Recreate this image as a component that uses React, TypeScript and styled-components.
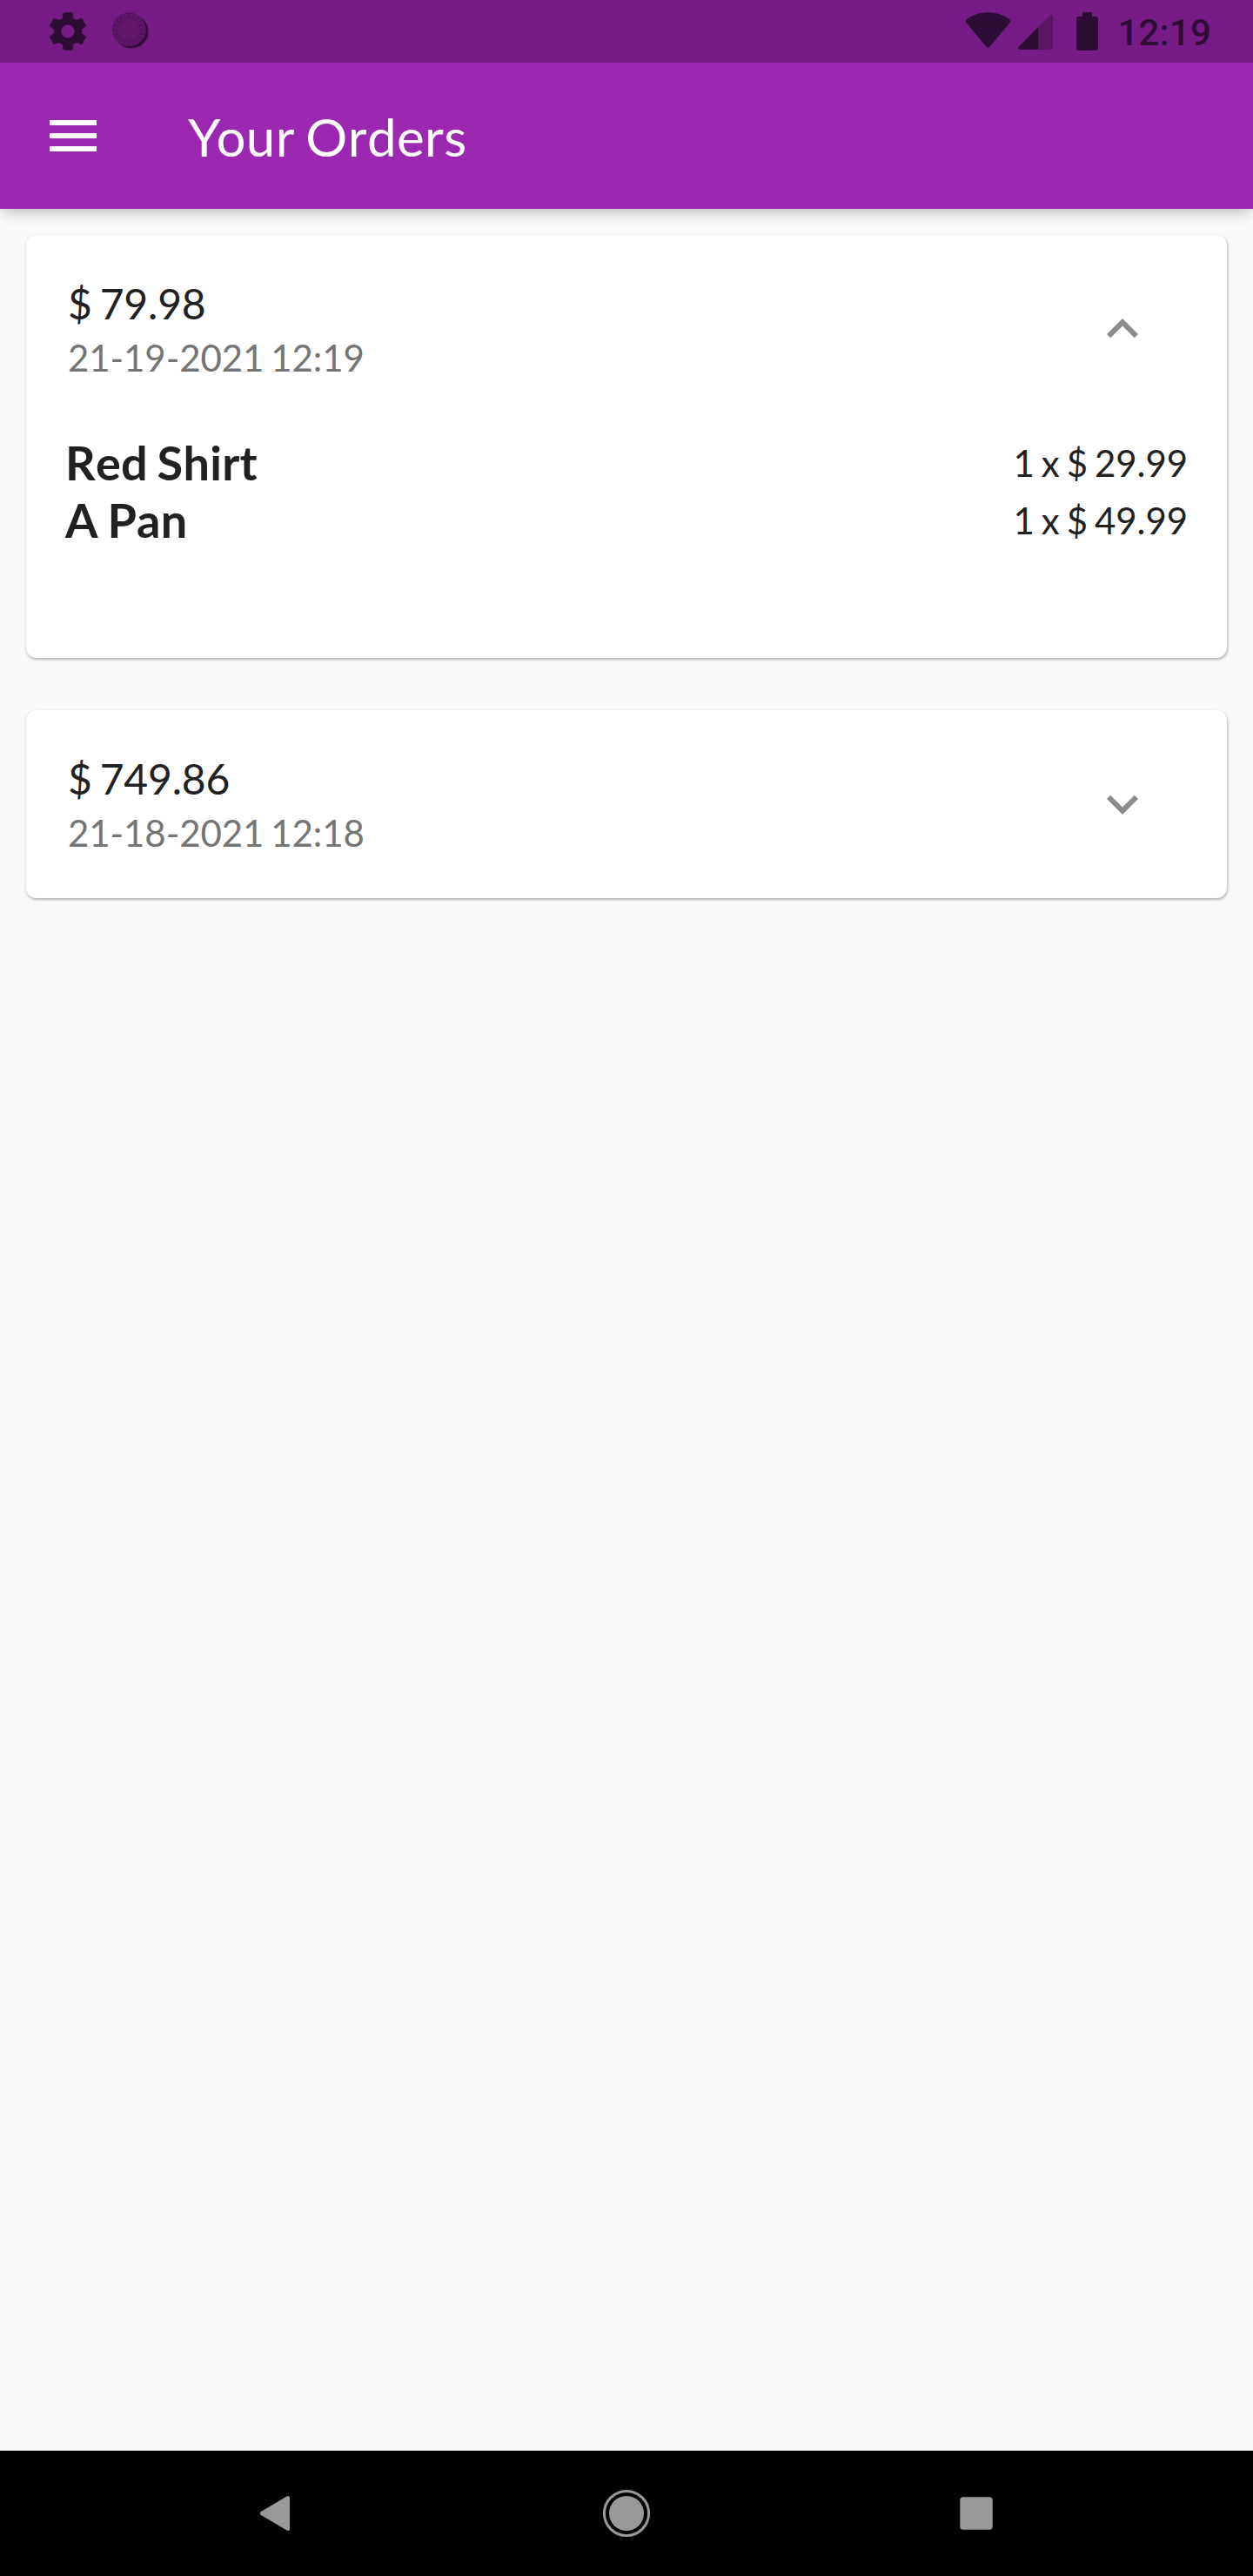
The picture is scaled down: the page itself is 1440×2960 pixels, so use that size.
import React, { useState } from "react";
import styled, { createGlobalStyle } from "styled-components";

const Global = createGlobalStyle`
  * { box-sizing: border-box; }
  body { margin: 0; background: #fafafa; }
`;

const dim = "#2f0c35";
const faded = "#5a1665";

const Screen = styled.div`
  display: flex;
  flex-direction: column;
  width: 1440px;
  height: 2960px;
  background: #fafafa;
  color: #212121;
  font-family: Lato, "Liberation Sans", sans-serif;
  font-kerning: none;
`;

const TopArea = styled.header`
  background: #9c27b0;
  box-shadow: 0 6px 15px -4px rgba(0, 0, 0, 0.2), 0 4px 20px -2px rgba(0, 0, 0, 0.13);
`;

const StatusBar = styled.div`
  display: flex;
  justify-content: space-between;
  height: 72px;
  padding: 0 48px 0 52px;
  background: #751d84;
`;

const StatusGroup = styled.div`
  display: flex;
  align-items: center;
`;

const Glyph = styled.svg<{ $gap?: number }>`
  display: block;
  flex: none;
  margin-left: ${(p) => p.$gap ?? 0}px;
`;

const Clock = styled.time`
  width: 108px;
  margin-left: 22px;
  padding-top: 3px;
  color: ${dim};
  font: 500 42px/72px Roboto, sans-serif;
  letter-spacing: 0.2px;
  text-align: right;
  white-space: nowrap;
`;

const AppBar = styled.div`
  display: flex;
  align-items: center;
  height: 168px;
  padding-left: 57px;
`;

const MenuButton = styled.button`
  display: flex;
  flex-direction: column;
  gap: 9px;
  width: 54px;
  padding: 0;
  border: 0;
  background: none;
`;

const MenuLine = styled.span`
  height: 6px;
  background: #fff;
`;

const Title = styled.h1`
  margin: 0 0 0 105px;
  padding-top: 2px;
  color: #fff;
  font-size: 60px;
  font-weight: 400;
  line-height: 72px;
  letter-spacing: 0.4px;
  word-spacing: -3.5px;

  &::first-letter {
    letter-spacing: -5px;
  }
`;

const OrderList = styled.main`
  display: flex;
  flex: 1;
  flex-direction: column;
  gap: 60px;
  padding: 30px;
`;

const Card = styled.article`
  border-radius: 12px;
  background: #fff;
  box-shadow: 1px 2px 3px rgba(0, 0, 0, 0.22), 0 1px 4px rgba(0, 0, 0, 0.12);
`;

const CardHeader = styled.div`
  display: flex;
  align-items: center;
  justify-content: space-between;
  height: 216px;
  padding: 0 84px 0 48px;
`;

const Summary = styled.div`
  display: flex;
  flex-direction: column;
  gap: 2px;
  padding-top: 3px;
`;

const Amount = styled.span`
  font-size: 48px;
  line-height: 61px;
  letter-spacing: -0.2px;
  word-spacing: -3px;
`;

const Placed = styled.span`
  color: #757575;
  font-size: 42px;
  line-height: 60px;
  letter-spacing: -0.08px;
  word-spacing: -2.65px;
`;

const Toggle = styled.button`
  padding: 0;
  border: 0;
  background: none;
`;

const Items = styled.ul`
  height: 270px;
  margin: 0;
  padding: 13px 45px 0;
  list-style: none;
`;

const Item = styled.li`
  display: flex;
  justify-content: space-between;
  line-height: 66px;
`;

const ItemName = styled.span`
  font-size: 54px;
  font-weight: 700;
  letter-spacing: 0.25px;
  word-spacing: -2.7px;
`;

const ItemPrice = styled.span`
  font-size: 42px;
  letter-spacing: -0.07px;
  word-spacing: -2.65px;
`;

const NavBar = styled.nav`
  display: flex;
  align-items: center;
  justify-content: space-between;
  height: 144px;
  padding: 0 282px;
  background: #000;
`;

type Line = { name: string; price: string };
type Order = { total: string; date: string; lines: Line[] };

const orders: Order[] = [
  {
    total: "$ 79.98",
    date: "21-19-2021 12:19",
    lines: [
      { name: "Red Shirt", price: "1 x $ 29.99" },
      { name: "A Pan", price: "1 x $ 49.99" },
    ],
  },
  { total: "$ 749.86", date: "21-18-2021 12:18", lines: [] },
];

const ticks = Array.from({ length: 20 }, (_, i) => i * 18);

function OrderCard({ order, initiallyOpen }: { order: Order; initiallyOpen: boolean }) {
  const [open, setOpen] = useState(initiallyOpen);
  return (
    <Card>
      <CardHeader>
        <Summary>
          <Amount>{order.total}</Amount>
          <Placed>{order.date}</Placed>
        </Summary>
        <Toggle aria-label="Toggle details" onClick={() => setOpen(!open)}>
          <Glyph width="72" height="72" viewBox="0 0 24 24" fill="#8c8c8c">
            <path
              d={
                open
                  ? "M12 8l-6 6 1.41 1.41L12 10.83l4.59 4.58L18 14z"
                  : "M16.59 8.59L12 13.17 7.41 8.59 6 10l6 6 6-6z"
              }
            />
          </Glyph>
        </Toggle>
      </CardHeader>
      {open && (
        <Items>
          {order.lines.map((line) => (
            <Item key={line.name}>
              <ItemName>{line.name}</ItemName>
              <ItemPrice>{line.price}</ItemPrice>
            </Item>
          ))}
        </Items>
      )}
    </Card>
  );
}

export default function App() {
  return (
    <Screen>
      <Global />
      <TopArea>
        <StatusBar>
          <StatusGroup>
            <Glyph width="52" height="52" viewBox="0 0 24 24" fill={dim}>
              <path d="M19.43 12.98c.04-.32.07-.64.07-.98s-.03-.66-.07-.98l2.11-1.65c.19-.15.24-.42.12-.64l-2-3.46c-.12-.22-.39-.3-.61-.22l-2.49 1c-.52-.4-1.08-.73-1.69-.98l-.38-2.65C14.46 2.18 14.25 2 14 2h-4c-.25 0-.46.18-.49.42l-.38 2.65c-.61.25-1.17.59-1.69.98l-2.49-1c-.23-.09-.49 0-.61.22l-2 3.46c-.13.22-.07.49.12.64l2.11 1.65c-.04.32-.07.65-.07.98s.03.66.07.98l-2.11 1.65c-.19.15-.24.42-.12.64l2 3.46c.12.22.39.3.61.22l2.49-1c.52.4 1.08.73 1.69.98l.38 2.65c.03.24.24.42.49.42h4c.25 0 .46-.18.49-.42l.38-2.65c.61-.25 1.17-.59 1.69-.98l2.49 1c.23.09.49 0 .61-.22l2-3.46c.12-.22.07-.49-.12-.64l-2.11-1.65zM12 15.5c-1.93 0-3.5-1.57-3.5-3.5s1.57-3.5 3.5-3.5 3.5 1.57 3.5 3.5-1.57 3.5-3.5 3.5z" />
            </Glyph>
            <Glyph $gap={20} width="52" height="72" viewBox="124 0 52 72">
              <circle cx="151.4" cy="36.800" r="19.800" fill="#64196f" />
              <circle cx="150.8" cy="36" r="19.300" fill={dim} />
              <circle cx="148.3" cy="34" r="19.500" fill="#56155f" />
              <circle cx="148.3" cy="34" r="18.600" fill="#601769" />
              {ticks.map((a) => (
                <path
                  key={a}
                  d="M148.3 15.500v6.500"
                  stroke="#541360"
                  strokeWidth="2.600"
                  transform={`rotate(${a} 148.3 34)`}
                />
              ))}
            </Glyph>
          </StatusGroup>
          <StatusGroup>
            <Glyph width="52" height="72" viewBox="1110 0 52 72" fill={dim}>
              <path d="M1110.6 22.5C1117 17.5 1126 14.3 1135.5 14.3S1154 17.5 1160.400 22.500Q1161.600 24 1160.500 26L1137.500 53.800Q1135.500 56 1133.500 53.800L1110.500 26Q1109.400 24 1110.600 22.500Z" />
            </Glyph>
            <Glyph $gap={8} width="40" height="72" viewBox="1170 0 40 72">
              <path d="M1206.500 17.800Q1210 15.500 1210 19.500V54.500Q1210 57 1207.500 57H1193V31.300Z" fill={faded} />
              <path d="M1193 31.300V57H1172.500Q1168.800 57 1170.800 53.500Z" fill={dim} />
            </Glyph>
            <Glyph $gap={27} width="25" height="72" viewBox="1237 0 25 72" fill={dim}>
              <path d="M1244 14h11v5h5q2 0 2 2v35q0 2-2 2h-21q-2 0-2-2v-35q0-2 2-2h5z" />
            </Glyph>
            <Clock>12:19</Clock>
          </StatusGroup>
        </StatusBar>
        <AppBar>
          <MenuButton aria-label="Menu">
            <MenuLine />
            <MenuLine />
            <MenuLine />
          </MenuButton>
          <Title>Your Orders</Title>
        </AppBar>
      </TopArea>
      <OrderList>
        {orders.map((order, i) => (
          <OrderCard key={order.date} order={order} initiallyOpen={i === 0} />
        ))}
      </OrderList>
      <NavBar>
        <Glyph width="72" height="72" viewBox="0 0 72 72" fill="#999">
          <path d="M18 34L47.500 16.400Q51 15 51 18.500V53.500Q51 57 47.500 55.600L18 38Q15.500 36 18 34Z" />
        </Glyph>
        <Glyph width="72" height="72" viewBox="0 0 72 72" fill="#999">
          <circle cx="36" cy="36" r="20" />
          <circle cx="36" cy="36" r="25.600" fill="none" stroke="#999" strokeWidth="3" />
        </Glyph>
        <Glyph width="72" height="72" viewBox="0 0 72 72" fill="#999">
          <rect x="17.300" y="17.300" width="37.400" height="37.400" rx="3.500" />
        </Glyph>
      </NavBar>
    </Screen>
  );
}
